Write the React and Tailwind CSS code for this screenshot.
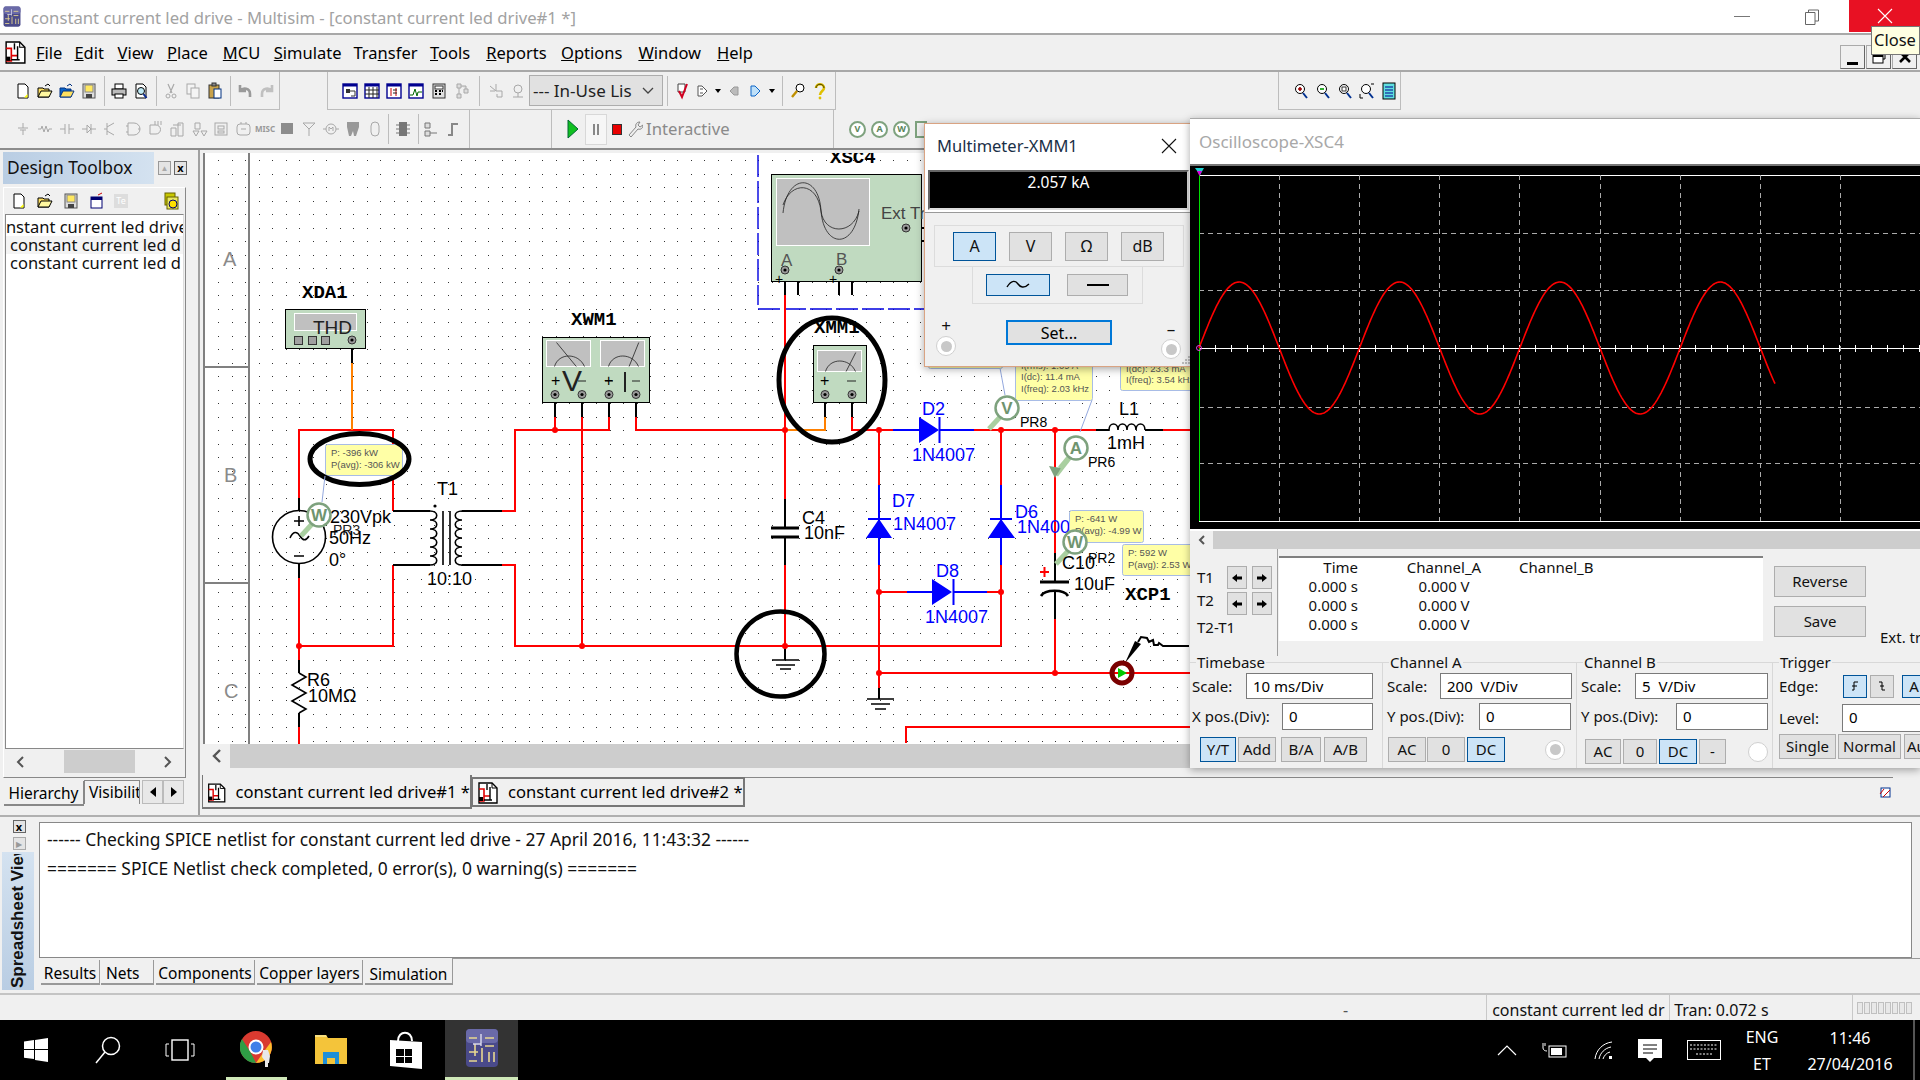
import React from "react";

const UI = "font-['Noto_Sans','Open_Sans',sans-serif]";

/* ---------- toolbar icons ---------- */
const g = "#a8a8a8";
const ICONS = {
  new: <><path d="M4 2h7l3 3v11H4z" fill="#fff" stroke="#000" /><path d="M10 15.5l3.5-3.5v3.5z" fill="#ff0" /></>,
  open: <><path d="M2 6h5l1 1h5v8H2z" fill="#ffe060" stroke="#000" /><path d="M2 15l3-6h11l-3 6z" fill="#fff8a0" stroke="#000" /><path d="M9 4l3-2 2 2" fill="none" stroke="#000" /></>,
  open2: <><path d="M2 6h5l1 1h5v8H2z" fill="#0a64c8" stroke="#003080" /><path d="M2 15l3-6h11l-3 6z" fill="#ffe060" stroke="#003080" /><path d="M9 4l3-2 2 2" fill="none" stroke="#003080" /></>,
  save: <><rect x="3" y="2" width="12" height="14" fill="#ddd" stroke="#555" /><rect x="5" y="3" width="8" height="7" fill="#ffe860" stroke="#888" /><rect x="6" y="12" width="6" height="4" fill="#444" /></>,
  print: <><rect x="5" y="2" width="8" height="5" fill="#fff" stroke="#000" /><rect x="2" y="7" width="14" height="6" fill="#bbb" stroke="#000" /><rect x="5" y="12" width="8" height="4" fill="#fff" stroke="#000" /></>,
  prev: <><path d="M4 2h7l3 3v11H4z" fill="#fff" stroke="#000" /><circle cx="9" cy="9" r="3.5" fill="#bfe9f5" stroke="#000" /><path d="M11.5 12l3 4" stroke="#0a2a90" strokeWidth="2" /></>,
  cutb: <><path d="M6 2l4 9M12 2l-4 9" stroke={g} fill="none" strokeWidth="1.2" /><circle cx="6" cy="14" r="2" fill="none" stroke={g} /><circle cx="12" cy="14" r="2" fill="none" stroke={g} /></>,
  copy: <><rect x="3" y="2" width="8" height="10" fill="#f4f4f4" stroke={g} /><rect x="7" y="6" width="8" height="10" fill="#f4f4f4" stroke={g} /></>,
  paste: <><rect x="3" y="3" width="10" height="13" fill="#c9a24a" stroke="#333" /><rect x="6" y="1" width="4" height="3" fill="#888" stroke="#333" /><rect x="8" y="7" width="7" height="9" fill="#fff" stroke="#003080" /></>,
  undo: <path d="M4 3v6h6M4 9c3-4 10-3 10 3v3" fill="none" stroke="#9a9a9a" strokeWidth="2.6" />,
  redo: <path d="M14 3v6H8M14 9c-3-4-10-3-10 3v3" fill="none" stroke="#c0c0c0" strokeWidth="2.6" />,
  s1: <><rect x="2" y="2" width="14" height="14" fill="#fff" stroke="#000090" strokeWidth="1.4" /><rect x="2" y="2" width="14" height="2.5" fill="#000090" /><rect x="5" y="7" width="4" height="4" fill="#333" /><path d="M9 9h5v5h-4" stroke="#333" fill="none" /></>,
  s2: <><rect x="2" y="2" width="14" height="14" fill="#fff" stroke="#000090" strokeWidth="1.4" /><rect x="2" y="2" width="14" height="2.5" fill="#000090" /><path d="M2 8h14M2 12h14M6 5v11M10 5v11M14 5v11" stroke="#222" /></>,
  s3: <><rect x="2" y="2" width="14" height="14" fill="#fff" stroke="#000090" strokeWidth="1.4" /><rect x="2" y="2" width="14" height="2.5" fill="#000090" /><path d="M6 6v8M11 6v8" stroke="#c00" /><path d="M8 8h4M8 11h4" stroke="#222" /></>,
  s4: <><rect x="2" y="2" width="14" height="14" fill="#fff" stroke="#000090" strokeWidth="1.4" /><rect x="2" y="2" width="14" height="2.5" fill="#000090" /><path d="M3 13h3l2-6 2 7 1-4h4" stroke="#060" fill="none" /></>,
  s5: <><rect x="3" y="2" width="12" height="14" fill="#e0e0e0" stroke="#333" /><rect x="5" y="4" width="8" height="3" fill="#fff" stroke="#333" /><path d="M5 9h2M9 9h2M13 9h-1M5 12h2M9 12h2" stroke="#000" strokeWidth="2" /></>,
  s6: <path d="M4 2h4v4H4zM11 7h4v4h-4zM4 12h4v4H4zM8 4h5v3M6 6v6" fill="#ddd" stroke={g} />,
  g1: <path d="M3 4l6 5M3 9h5M9 2v7M9 9h6v6h-5v-3" fill="none" stroke={g} />,
  g2: <><circle cx="9" cy="7" r="4" fill="none" stroke={g} /><path d="M4 15h10M9 11v4" stroke={g} /></>,
  check: <><path d="M5 2h7v8H5z" fill="#fff" stroke="#444" /><path d="M6 9l3 6 5-13" fill="none" stroke="#d00020" strokeWidth="2" /></>,
  t1: <path d="M4 4h4l5 5-5 5H4zM6 7h3M6 11h3" fill="#fff" stroke="#555" />,
  t2: <path d="M13 5H9L5 9l4 4h4z" fill="#bbb" stroke="#999" />,
  t3: <path d="M4 4h4l5 5-5 5H4z" fill="#bfe0f8" stroke="#0a64c8" />,
  find: <><circle cx="11" cy="6" r="4" fill="#fff" stroke="#000" /><path d="M8 9l-5 6" stroke="#c09000" strokeWidth="2.4" /></>,
  help: <><path d="M5 6c0-5 8-5 8 0 0 3-4 3-4 7" fill="none" stroke="#e0c000" strokeWidth="2.6" /><circle cx="9" cy="16" r="1.4" fill="#e0c000" /><path d="M5 6c0-5 8-5 8 0" fill="none" stroke="#000" strokeWidth=".7" /></>,
  zi: <><circle cx="8" cy="7" r="4.5" fill="#fff" stroke="#000" /><path d="M8 5v4M6 7h4" stroke="#900" strokeWidth="1.6" /><path d="M11 11l4 5" stroke="#003090" strokeWidth="2" /></>,
  zo: <><circle cx="8" cy="7" r="4.5" fill="#fff" stroke="#000" /><path d="M6 7h4" stroke="#090" strokeWidth="1.6" /><path d="M11 11l4 5" stroke="#003090" strokeWidth="2" /></>,
  zr: <><circle cx="8" cy="7" r="4.5" fill="#fff" stroke="#000" /><rect x="6" y="5" width="4" height="4" fill="none" stroke="#333" /><path d="M11 11l4 5" stroke="#003090" strokeWidth="2" /></>,
  zf: <><circle cx="8" cy="7" r="4.5" fill="#fff" stroke="#000" /><path d="M2 12v4h3M16 2h-3" stroke="#000" fill="none" /><path d="M11 11l4 5" stroke="#003090" strokeWidth="2" /></>,
  sheet: <><rect x="3" y="1" width="12" height="16" fill="#60e0e0" stroke="#000" /><path d="M5 5h8M5 8h8M5 11h8M5 14h8" stroke="#000090" /></>,
  tb4: <><rect x="3" y="5" width="11" height="11" fill="#fff" stroke="#000070" /><rect x="3" y="5" width="11" height="3" fill="#000070" /><path d="M10 3l4-2" stroke="#c00" /></>,
  tb6: <><rect x="3" y="1" width="10" height="12" fill="#c8c800" stroke="#666000" /><rect x="5" y="5" width="11" height="12" fill="#e8e860" stroke="#666000" /><circle cx="11" cy="12" r="4" fill="#ffe000" stroke="#000070" /></>,
  p0: <path d="M9 3v5M4 8h10M6 10h6M9 10v5" stroke={g} fill="none" />,
  p1: <path d="M2 9h3l1-3 2 6 2-6 2 6 1-3h3" stroke={g} fill="none" />,
  p2: <path d="M2 9h5M11 9h5M7 4v10M11 4v10" stroke={g} fill="none" />,
  p3: <path d="M2 9h5M11 9h5M7 5l4 4-4 4zM11 4v10" stroke={g} fill="none" />,
  p4: <path d="M5 3v12M5 7l7-4M5 11l7 4M2 9h3" stroke={g} fill="none" />,
  p5: <path d="M4 3h6a6 6 0 010 12H4zM2 6h2M2 12h2M16 9h-2" stroke={g} fill="none" />,
  p6: <><path d="M4 5h6a4 4 0 010 9H4z" stroke={g} fill="none" /><path d="M8 2h8M8 4h8" stroke={g} strokeDasharray="2 1" /></>,
  p7: <path d="M3 8h5v8H3zM10 3h5v13h-5zM5 5h8" stroke={g} fill="none" />,
  p8: <path d="M5 3h5v6H5zM3 11l3 5 3-5zM11 11l3 5 3-5z" stroke={g} fill="none" />,
  p9: <><rect x="3" y="3" width="12" height="12" fill="none" stroke={g} /><rect x="6" y="6" width="6" height="3" fill="none" stroke={g} /><rect x="6" y="11" width="6" height="2" fill="none" stroke={g} /></>,
  p10: <><rect x="3" y="4" width="13" height="11" rx="3" fill="none" stroke={g} /><path d="M7 2v2M12 2v2M7 9h5" stroke={g} /></>,
  p12: <rect x="3" y="3" width="12" height="11" fill="#8c8c8c" />,
  p13: <path d="M3 3l6 6 6-6M9 9v7M3 3h12" stroke={g} fill="none" />,
  p14: <><circle cx="9" cy="9" r="5" fill="none" stroke={g} /><path d="M1 9h3M14 9h3M7 11V7l2 2 2-2v4" stroke={g} fill="none" /></>,
  p15: <path d="M3 2h12v5l-3 9h-2l-1-5-2 5H5L3 7z" fill="#999" />,
  p16: <rect x="5" y="2" width="8" height="14" rx="4" fill="none" stroke={g} />,
  p17: <><rect x="5" y="2" width="8" height="14" fill="#777" /><path d="M2 5h14M2 9h14M2 13h14" stroke="#777" /></>,
  p18: <path d="M3 3h5v5H3zM3 11h5v5H3zM8 13h7" fill="#ddd" stroke="#777" />,
  p19: <path d="M4 15h4V4h6" fill="none" stroke="#888" strokeWidth="2" />,
  wrench: <path d="M4 15l7-8c-1-3 1-5 4-5l-2 3 2 2 3-2c0 3-2 5-5 4l-7 8z" fill="#eee" stroke="#888" />,
};

function Ic({ n, cls = "w-[22px]" }) {
  return (
    <span className={`${cls} h-[20px] flex items-center justify-center shrink-0`}>
      <svg width="18" height="18" viewBox="0 0 18 18">{ICONS[n]}</svg>
    </span>
  );
}
const Sep = ({ cls = "w-[8px]" }) => (
  <span className={`${cls} h-[30px] flex justify-center shrink-0`}><span className="w-[1px] h-full bg-[#bdbdbd]" /></span>
);
const Arrow = () => <span className="w-[10px] shrink-0 flex justify-center"><span className="border-x-[3px] border-x-transparent border-t-[4px] border-t-black" /></span>;

const DocIcon = ({ s = 24 }) => (
  <svg width={s} height={s} viewBox="0 0 24 24">
    <path d="M3 2h13l5 5v15H3z" fill="#fff" stroke="#000" strokeWidth="1.4" />
    <path d="M16 2v5h5" fill="none" stroke="#000" />
    <path d="M3 8h5v7h6M8 15v5H3" fill="none" stroke="#e00000" strokeWidth="1.6" />
    <path d="M11 3v6M14 6v13M8 19h8" fill="none" stroke="#000" strokeWidth="1.4" />
    <rect x="3" y="16" width="4" height="4" fill="#000" />
  </svg>
);

/* ---------- schematic ---------- */
function dotsPath() {
  let d = "";
  for (let i = 0; i < 74; i++) {
    const x = Math.round(218.3 + i * 13.5);
    for (let j = 0; j < 44; j++) {
      const y = Math.round(160 + j * 13.5);
      d += `M${x} ${y}h1v1h-1z`;
    }
  }
  return d;
}
const W = ({ p, c = "#ff0000", w = 2 }) => (
  <polyline points={p} fill="none" stroke={c} strokeWidth={w} shapeRendering="crispEdges" />
);
const Node = ({ x, y }) => <circle cx={x} cy={y} r="3" fill="#ff0000" />;
const T = ({ x, y, s = 18, c = "#000", f = "'Liberation Sans',sans-serif", b, children }) => (
  <text x={x} y={y} fontSize={s} fill={c} fontFamily={f} fontWeight={b ? 700 : 400}>{children}</text>
);
const MonoLabel = ({ x, y, children }) => (
  <T x={x} y={y} s={19} b f="'Liberation Mono',monospace">{children}</T>
);
const Pin = ({ x, y }) => (
  <g>
    <circle cx={x} cy={y} r="4" fill="#9a9a9a" stroke="#333" />
    <circle cx={x} cy={y} r="1.6" fill="#000" />
  </g>
);
const Meter = ({ x, y, w, h, flip }) => (
  <g>
    <rect x={x} y={y} width={w} height={h} fill="#c0c0c0" stroke="#fff" />
    <path d={`M${x + 8} ${y + h}c4-14 ${w - 20}-14 ${w - 14} 0`} fill="none" stroke="#222" strokeWidth=".8" />
    <path d={flip ? `M${x + w * 0.65} ${y + h}l${w * 0.22} ${-h + 2}` : `M${x + 10} ${y + 2}l${w * 0.45} ${h - 2}`} stroke="#222" strokeWidth=".8" />
  </g>
);
const Probe = ({ cx, cy, l, tx, ty }) => (
  <g>
    <path d={`M${cx - 6} ${cy + 8}L${tx} ${ty}`} stroke="#a9cfa0" strokeWidth="5" />
    <circle cx={cx} cy={cy} r="11.5" fill="#fff" stroke="#7ea27e" strokeWidth="2.5" />
    <text x={cx} y={cy + 6} textAnchor="middle" fontSize="17" fontWeight="700" fill="#6f946f" fontFamily="'Liberation Sans',sans-serif">{l}</text>
  </g>
);
const TS = 9.5;
const Tip = ({ x, y, w, h, a, b }) => (
  <g>
    <rect x={x + 0.5} y={y + 0.5} width={w} height={h} rx="2" fill="#ffffa6" stroke="#a8bce6" />
    {a && <T x={x + 6} y={y + 12} s={TS} c="#555">{a}</T>}
    {b && <T x={x + 6} y={y + 24} s={TS} c="#555">{b}</T>}
  </g>
);

function Schematic() {
  return (
    <svg className="block w-[987px] h-[591px]" viewBox="203 153 987 591">
      <rect x="203" y="153" width="987" height="591" fill="#fff" />
      <path d={dotsPath()} fill="#333" />
      <path d="M204 153v591M249 153v591M204 367h45M204 583h45" stroke="#808080" strokeWidth="2" fill="none" />
      <T x={223} y={266} s={20} c="#8a8a8a">A</T>
      <T x={224} y={482} s={20} c="#8a8a8a">B</T>
      <T x={224} y={698} s={20} c="#8a8a8a">C</T>

      <path d="M758 155v150M758 309h166" stroke="#0000e0" strokeWidth="1.4" strokeDasharray="22 4" fill="none" />

      <W p="299,498 299,430 393,430 393,511" />
      <W p="299,578 299,660" />
      <W p="299,727 299,744" />
      <W p="299,646 393,646 393,565" />
      <W p="502,511 515,511 515,430 609,430 609,417" />
      <W p="555,430 555,417" />
      <W p="582,417 582,646" />
      <W p="502,565 515,565 515,646 1001,646" />
      <W p="636,417 636,430 825,430" />
      <W p="785,295 785,499" />
      <W p="785,565 785,646" />
      <W p="852,417 852,430 893,430" />
      <W p="974,430 1096,430" />
      <W p="1163,430 1190,430" />
      <W p="879,430 879,485" />
      <W p="879,565 879,688" />
      <W p="1001,430 1001,485" />
      <W p="1001,565 1001,646" />
      <W p="879,592 907,592" />
      <W p="987,592 1001,592" />
      <W p="1055,430 1055,553" />
      <W p="1055,619 1055,673" />
      <W p="879,673 1190,673" />
      <W p="906,743 906,727 1190,727" />
      <W p="352,363 352,430" c="#ff8000" />
      <W p="825,417 825,430 785,430" c="#ff8000" />
      <W p="352,340 352,363" c="#000" />
      <W p="299,498 299,511" c="#000" />
      <W p="299,564 299,578" c="#000" />
      <W p="299,660 299,673" c="#000" />
      <W p="299,713 299,727" c="#000" />
      <W p="393,511 430,511" c="#000" />
      <W p="393,565 430,565" c="#000" />
      <W p="462,511 502,511" c="#000" />
      <W p="462,565 502,565" c="#000" />
      <W p="555,395 555,417" c="#000" />
      <W p="582,395 582,417" c="#000" />
      <W p="609,395 609,417" c="#000" />
      <W p="636,395 636,417" c="#000" />
      <W p="825,395 825,417" c="#000" />
      <W p="852,395 852,417" c="#000" />
      <W p="785,499 785,528" c="#000" />
      <W p="785,537 785,565" c="#000" />
      <W p="785,646 785,660" c="#000" />
      <W p="879,688 879,699" c="#000" />
      <W p="1055,553 1055,582" c="#000" />
      <W p="1055,592 1055,619" c="#000" />
      <W p="1096,430 1109,430" c="#000" />
      <W p="1145,430 1163,430" c="#000" />
      <W p="785,270 785,295" c="#000" />
      <W p="785,270 798,270 798,295" c="#000" />
      <W p="839,270 839,295" c="#000" />
      <W p="839,270 852,270 852,295" c="#000" />
      <W p="906,228 924,228" c="#000" />
      <W p="906,228 906,241 924,241" c="#000" />

      <W p="893,430 919,430" c="#0000ff" />
      <W p="939,430 974,430" c="#0000ff" />
      <W p="879,485 879,565" c="#0000ff" />
      <W p="1001,485 1001,565" c="#0000ff" />
      <W p="907,592 932,592" c="#0000ff" />
      <W p="953,592 987,592" c="#0000ff" />
      <path d="M919 417l20 13-20 13zM932 579l20 13-20 13zM866 538l13-19 13 19zM988 538l13-19 14 19z" fill="#0000ff" />
      <path d="M939.5 417v26M953.5 579v26M868 519h23M990 519h22" stroke="#0000ff" strokeWidth="2" fill="none" />

      {[[299, 646], [555, 430], [582, 646], [785, 430], [785, 646], [879, 430], [1001, 430], [1055, 430], [879, 592], [1001, 592], [879, 673], [1055, 673]].map(([x, y]) => (
        <Node key={x + "-" + y} x={x} y={y} />
      ))}

      {/* XDA1 */}
      <MonoLabel x={302} y={298}>XDA1</MonoLabel>
      <rect x="285.5" y="309.5" width="80" height="39" fill="#c0dac0" stroke="#000" />
      <rect x="294.5" y="313.5" width="62" height="17" fill="#c0c0c0" stroke="#fff" />
      <T x={313} y={334} s={19} c="#222">THD</T>
      {[294, 308, 321].map((x) => <rect key={x} x={x + 0.5} y="336.5" width="8" height="8" fill="#a0a0a0" stroke="#333" />)}
      <Pin x={352} y={340} />

      {/* XWM1 */}
      <MonoLabel x={571} y={325}>XWM1</MonoLabel>
      <rect x="542.5" y="337.5" width="107" height="65" fill="#c0dac0" stroke="#000" />
      <Meter x={546.5} y={340.5} w={44} h={26} />
      <Meter x={600.5} y={340.5} w={44} h={26} flip />
      <T x={551} y={386} s={16}>+</T>
      <T x={562} y={391} s={30} c="#222">V</T>
      <path d="M578 381h8M605 381h8M632 381h8" stroke="#222" />
      <T x={604} y={386} s={16}>+</T>
      <path d="M625 372v20" stroke="#222" strokeWidth="2" />
      {[555, 582, 609, 636].map((x) => <Pin key={x} x={x} y={394.5} />)}

      {/* XMM1 */}
      <MonoLabel x={814} y={333}>XMM1</MonoLabel>
      <rect x="813.5" y="345.5" width="53" height="57" fill="#c0dac0" stroke="#000" />
      <Meter x={817.5} y={350.5} w={44} h={21} flip />
      <T x={820} y={386} s={16}>+</T>
      <path d="M847 381h9" stroke="#222" />
      <Pin x={825} y={394.5} /><Pin x={852} y={394.5} />
      <ellipse cx="832" cy="380" rx="53" ry="62" fill="none" stroke="#000" strokeWidth="5" />

      {/* XSC4 */}
      <MonoLabel x={830} y={163}>XSC4</MonoLabel>
      <rect x="771.5" y="174.5" width="150" height="107" fill="#c0dac0" stroke="#000" />
      <rect x="776.5" y="178.5" width="93" height="67" fill="#c0c0c0" stroke="#fff" />
      <path d="M783 213c4-40 36-40 38-2 3 38 34 38 38-2M783 205c8-24 34-24 38 6 3 24 32 24 38 0" fill="none" stroke="#222" strokeWidth=".8" />
      <T x={781} y={266} s={17} c="#555">A</T>
      <T x={836} y={265} s={17} c="#555">B</T>
      <T x={775} y={284} s={14}>+</T>
      <T x={829} y={284} s={14}>+</T>
      <T x={881} y={219} s={17} c="#444">Ext Tri</T>
      <Pin x={785} y={270} /><Pin x={839} y={270} /><Pin x={906} y={228} />

      {/* AC source */}
      <circle cx="299" cy="537" r="26.5" fill="none" stroke="#000" strokeWidth="1.6" />
      <path d="M294 521h10M299 516v10M294 556h10" stroke="#000" strokeWidth="1.6" />
      <path d="M290 538c3-7 7-7 10-2s6 5 9 0" fill="none" stroke="#000" strokeWidth="1.6" />
      <T x={330} y={523}>230Vpk</T>
      <T x={333} y={535} s={14} c="#222">PR3</T>
      <T x={329} y={544}>50Hz</T>
      <T x={329} y={566}>0°</T>

      <Tip x={325} y={444} w={77} h={31} a="P: -396 kW" b="P(avg): -306 kW" />
      <ellipse cx="359.5" cy="459" rx="49.5" ry="25.5" fill="none" stroke="#000" strokeWidth="5" />
      <path d="M325 476l-3 26" stroke="#93a8de" fill="none" />
      <Probe cx={319} cy={515} l="W" tx={301} ty={536} />

      {/* T1 */}
      <path d="M462 511c-9 0-9 9 0 9c-9 0-9 9 0 9c-9 0-9 9 0 9c-9 0-9 9 0 9c-9 0-9 9 0 9c-9 0-9 9 0 9" fill="none" stroke="#000" strokeWidth="1.6" />
      <path d="M430 511c9 0 9 9 0 9c9 0 9 9 0 9c9 0 9 9 0 9c9 0 9 9 0 9c9 0 9 9 0 9c9 0 9 9 0 9" fill="none" stroke="#000" strokeWidth="1.6" />
      <path d="M443 511v54M450 511v54" stroke="#000" strokeWidth="1.6" />
      <circle cx="435" cy="506" r="1.6" fill="#000" />
      <T x={437} y={495}>T1</T>
      <T x={427} y={585}>10:10</T>

      {/* R6 */}
      <path d="M299 673l7 4-14 8 14 8-14 8 14 8-7 4" fill="none" stroke="#000" strokeWidth="1.6" />
      <T x={307} y={686}>R6</T>
      <T x={308} y={702}>10MΩ</T>

      {/* C4 */}
      <path d="M771 528h28M771 537h28" stroke="#000" strokeWidth="3" />
      <T x={802} y={524}>C4</T>
      <T x={804} y={539}>10nF</T>

      {/* grounds */}
      <path d="M772 660h27M776 665h19M780 669h11M867 699h27M871 704h19M875 709h11" stroke="#000" strokeWidth="1.6" />
      <ellipse cx="780.5" cy="654" rx="44" ry="42.5" fill="none" stroke="#000" strokeWidth="4.5" />

      {/* diode labels */}
      <T x={922} y={415} c="#0000ff">D2</T>
      <T x={912} y={461} c="#0000ff">1N4007</T>
      <T x={892} y={507} c="#0000ff">D7</T>
      <T x={893} y={530} c="#0000ff">1N4007</T>
      <T x={1015} y={518} c="#0000ff">D6</T>
      <T x={1017} y={533} c="#0000ff">1N400</T>
      <T x={936} y={577} c="#0000ff">D8</T>
      <T x={925} y={623} c="#0000ff">1N4007</T>

      {/* L1 */}
      <path d="M1109 430c0-8 9-8 9 0c0-8 9-8 9 0c0-8 9-8 9 0c0-8 9-8 9 0" fill="none" stroke="#000" strokeWidth="1.6" />
      <T x={1119} y={415}>L1</T>
      <T x={1107} y={449}>1mH</T>

      {/* tips & probes */}
      <path d="M1000 368l5 27M1092 400l-12 32" stroke="#93a8de" fill="none" />
      <rect x="928.5" y="345.5" width="74" height="23" rx="2" fill="#ffffa6" stroke="#a8bce6" />
      <Tip x={1015} y={355} w={77} h={45} />
      <T x={1021} y={369} s={TS} c="#555">I(rms): 1.09 A</T>
      <T x={1021} y={380} s={TS} c="#555">I(dc): 11.4 mA</T>
      <T x={1021} y={392} s={TS} c="#555">I(freq): 2.03 kHz</T>
      <Tip x={1120} y={355} w={74} h={35} />
      <T x={1126} y={372} s={TS} c="#555">I(dc): 23.3 mA</T>
      <T x={1126} y={383} s={TS} c="#555">I(freq): 3.54 kHz</T>
      <Probe cx={1007} cy={408} l="V" tx={989} ty={429} />
      <T x={1020} y={427} s={14}>PR8</T>
      <path d="M1070 457L1056 475" stroke="#a9cfa0" strokeWidth="5" />
      <path d="M1049 466l6 12 6-10z" fill="#7ea27e" />
      <Probe cx={1076} cy={448} l="A" tx={1060} ty={468} />
      <T x={1088} y={467} s={14}>PR6</T>

      <Tip x={1069} y={510} w={74} h={32} a="P: -641 W" b="P(avg): -4.99 W" />
      <Tip x={1122} y={544} w={72} h={31} a="P: 592 W" b="P(avg): 2.53 W" />
      <Probe cx={1075} cy={542} l="W" tx={1056} ty={564} />
      <T x={1088} y={563} s={14}>PR2</T>
      <T x={1062} y={569}>C10</T>
      <T x={1074} y={590}>10uF</T>
      <path d="M1040 572h9M1044.5 567v10" stroke="#ff0000" strokeWidth="2" />
      <path d="M1040 582h29" stroke="#000" strokeWidth="3" />
      <path d="M1041 596c4-7 23-7 27 0" fill="none" stroke="#000" strokeWidth="2.6" />
      <MonoLabel x={1125} y={600}>XCP1</MonoLabel>

      {/* current clamp */}
      <path d="M1125 663l10-22 6 3z" fill="#000" />
      <path d="M1138 642l3-5 6 1 2 4 4-2 1 5 4 0 1-2 4 3h26" fill="none" stroke="#000" strokeWidth="2" />
      <circle cx="1122" cy="673" r="10" fill="none" stroke="#7a0000" strokeWidth="5" />
      <path d="M1118 668l9 5-9 5z" fill="#00c800" />
    </svg>
  );
}

/* ---------- small controls ---------- */
const BTN = "flex items-center justify-center border text-[15px] leading-none shrink-0";
const OFF = "bg-[#e1e1e1] border-[#adadad] text-[#111]";
const ON = "bg-[#cce4f7] border-[#005499] text-[#111]";
const Input = ({ cls, children }) => (
  <div className={`${cls} bg-white border border-[#7a7a7a] pl-[6px] text-[15px] leading-[24px] text-black shrink-0 whitespace-pre`}>{children}</div>
);
const Radio = ({ dot }) => (
  <span className="w-[20px] h-[20px] rounded-full bg-white border border-[#d0d0d0] flex items-center justify-center shrink-0">
    {dot && <span className="w-[11px] h-[11px] rounded-full bg-[#c8c8c8]" />}
  </span>
);
const ArrowBtn = ({ d }) => (
  <span className="w-[20px] h-[23px] bg-[#e1e1e1] border border-[#adadad] flex items-center justify-center">
    <svg width="10" height="10" viewBox="0 0 10 10"><path d={d === "l" ? "M0 5l5-4v2.5h5v3H5V9z" : "M10 5L5 1v2.5H0v3h5V9z"} fill="#000" /></svg>
  </span>
);
const GroupTitle = ({ children }) => (
  <span className="absolute top-[-11px] left-[6px] px-[1px] bg-[#f0f0f0] text-[15px] leading-[20px] text-[#111]">{children}</span>
);

/* ---------- windows ---------- */
function Multimeter() {
  return (
    <div className={`${UI} absolute left-[924px] top-[123px] w-[269px] h-[244px] border border-[#d9a382] bg-[#f0f0f0] shadow-[0_2px_8px_rgba(0,0,0,0.35)] flex flex-col`}>
      <div className="h-[44px] bg-white flex items-center justify-between pl-[12px] pr-[15px] shrink-0">
        <span className="text-[16.5px] text-[#1a2f47]">Multimeter-XMM1</span>
        <svg width="16" height="16" viewBox="0 0 16 16"><path d="M1 1l14 14M15 1L1 15" stroke="#111" strokeWidth="1.1" /></svg>
      </div>
      <div className="h-[44px] bg-[#fff] px-[3px] py-[2px] shrink-0">
        <div className="h-[40px] bg-black border-2 border-t-[#666] border-l-[#666] border-r-[#ddd] border-b-[#ddd] text-center text-white text-[15.5px] leading-[20px]">2.057 kA</div>
      </div>
      <div className="h-[1px] bg-[#999] shrink-0" />
      <div className="mx-[9px] mt-[12px] h-[42px] w-[250px] border border-[#dcdcdc] flex items-center gap-[13px] pl-[18px] shrink-0">
        <span className={`${BTN} ${ON} w-[43px] h-[29px] text-[16px]`}>A</span>
        <span className={`${BTN} ${OFF} w-[43px] h-[29px] text-[16px]`}>V</span>
        <span className={`${BTN} ${OFF} w-[43px] h-[29px] text-[16px]`}>Ω</span>
        <span className={`${BTN} ${OFF} w-[43px] h-[29px] text-[16px]`}>dB</span>
      </div>
      <div className="ml-[47px] h-[37px] w-[171px] border border-[#dcdcdc] border-t-0 flex items-center gap-[17px] pl-[13px] shrink-0">
        <span className={`${BTN} ${ON} w-[64px] h-[22px]`}>
          <svg width="24" height="10" viewBox="0 0 24 10"><path d="M1 7c5-8 9-6 11-3s6 5 11 0" fill="none" stroke="#000" strokeWidth="1.4" /></svg>
        </span>
        <span className={`${BTN} ${OFF} w-[61px] h-[22px]`}><span className="w-[22px] h-[2px] bg-black" /></span>
      </div>
      <div className="flex px-[11px] mt-[15px] justify-between">
        <div className="flex flex-col items-center w-[20px] -mt-[3px]">
          <span className="text-[17px] leading-[20px] text-[#111]">+</span>
          <Radio dot />
        </div>
        <span className={`${BTN} w-[106px] h-[25px] mt-[1px] ml-[9px] bg-[#e1e1e1] border-2 border-[#0078d7] text-[16px]`}>Set...</span>
        <div className="flex flex-col items-center w-[20px] ml-[8px]">
          <span className="text-[17px] leading-[20px] text-[#111]">–</span>
          <Radio dot />
        </div>
      </div>
      <svg width="10" height="10" viewBox="0 0 10 10" className="absolute right-[1px] bottom-[1px]"><path d="M7 1h2v2H7zM4 4h2v2H4zM7 4h2v2H7zM1 7h2v2H1zM4 7h2v2H4zM7 7h2v2H7z" fill="#bbb" /></svg>
    </div>
  );
}

function Screen() {
  const v = [1279, 1359, 1439, 1519, 1600, 1680, 1760, 1840];
  const h = [232, 289, 406, 462];
  let d = "";
  for (let x = 1199; x <= 1775; x += 1) {
    const y = 347 - 66 * Math.sin(((x - 1199) / 160.4) * 2 * Math.PI);
    d += `${x},${y.toFixed(1)} `;
  }
  const ticks = [];
  for (let x = 1199; x < 1920; x += 16) ticks.push(x);
  return (
    <svg className="block w-[730px] h-[363px] shrink-0" viewBox="1190 165 730 363">
      <rect x="1190" y="165" width="730" height="363" fill="#000" />
      <path d="M1199 174.5h721M1199 347.5h721M1199 520.5h721" stroke="#fff" strokeWidth="1.2" />
      {h.map((y) => <path key={y} d={`M1199 ${y}.5h721`} stroke="#aaa" strokeDasharray="5 4" />)}
      {v.map((x) => <path key={x} d={`M${x}.5 174v346`} stroke="#aaa" strokeDasharray="5 4" />)}
      {ticks.map((x) => <path key={x} d={`M${x}.5 344v7`} stroke="#fff" />)}
      <path d="M1199.5 174v346" stroke="#00e000" />
      <polyline points={d} fill="none" stroke="#ff0000" strokeWidth="1.6" />
      <circle cx="1199" cy="347" r="2.5" fill="none" stroke="#e040e0" />
      <path d="M1195 167h9l-4 7z" fill="#20d0d0" />
      <path d="M1197 170h5l-2.500 5z" fill="#e000e0" />
    </svg>
  );
}

function Scope() {
  const rows = [
    ["Time", "Channel_A", "Channel_B"],
    ["0.000 s", "0.000 V", ""],
    ["0.000 s", "0.000 V", ""],
    ["0.000 s", "0.000 V", ""],
  ];
  return (
    <div className={`${UI} absolute left-[1190px] top-[118px] w-[730px] h-[650px] bg-[#f0f0f0] border-t border-[#aaa] shadow-[0_2px_8px_rgba(0,0,0,0.35)] flex flex-col overflow-hidden text-[#111]`}>
      <div className="h-[45px] shrink-0 bg-white flex items-center pl-[9px] text-[17px] text-[#a8a8a8]">Oscilloscope-XSC4</div>
      <div className="h-[2px] shrink-0 bg-[#777]" />
      <Screen />
      <div className="h-[2px] shrink-0 bg-white" />
      <div className="h-[18px] shrink-0 flex bg-[#f0f0f0]">
        <span className="w-[23px] flex items-center justify-center text-[#555]">
          <svg width="8" height="10" viewBox="0 0 8 10"><path d="M6 1L2 5l4 4" fill="none" stroke="#555" strokeWidth="2" /></svg>
        </span>
        <span className="flex-1 bg-[#cdcdcd]" />
      </div>

      <div className="h-[107px] flex shrink-0">
        <div className="w-[88px] shrink-0 border-r border-[#a0a0a0] pl-[7px] pt-[17px] text-[15px]">
          <div className="flex h-[23px] items-center"><span className="w-[30px]">T1</span><span className="flex gap-[5px]"><ArrowBtn d="l" /><ArrowBtn d="r" /></span></div>
          <div className="flex h-[23px] mt-[3px] items-center"><span className="w-[30px] -mt-[6px]">T2</span><span className="flex gap-[5px]"><ArrowBtn d="l" /><ArrowBtn d="r" /></span></div>
          <div className="mt-[2px] leading-[20px]">T2-T1</div>
        </div>
        <div className="ml-[1px] mt-[7px] w-[484px] h-[85px] shrink-0 bg-white border-t-2 border-[#808080] text-[15px] leading-[19px]">
          {rows.map((r, i) => (
            <div key={i} className="flex">
              <span className="w-[79px] text-right">{r[0]}</span>
              <span className="ml-[30px] w-[112px] text-center">{r[1]}</span>
              <span className="ml-[19px]">{r[2]}</span>
            </div>
          ))}
        </div>
        <div className="ml-[11px] mt-[17px] flex flex-col gap-[9px] w-[92px] shrink-0">
          <span className={`${BTN} ${OFF} h-[31px]`}>Reverse</span>
          <span className={`${BTN} ${OFF} h-[31px]`}>Save</span>
        </div>
        <span className="ml-[14px] mt-[78px] text-[15px] leading-[20px] whitespace-nowrap">Ext. trigger</span>
      </div>

      <div className="flex mt-[6px] h-[106px] shrink-0 text-[15px]">
        <div className="relative w-[193px] shrink-0 border-t border-r border-[#d8d8d8] pl-[2px] pt-[10px]">
          <GroupTitle>Timebase</GroupTitle>
          <div className="flex items-center h-[26px]"><span className="w-[54px] shrink-0">Scale:</span><Input cls="w-[127px] h-[26px]">10 ms/Div</Input></div>
          <div className="flex items-center h-[27px] mt-[4px]"><span className="w-[90px] shrink-0">X pos.(Div):</span><Input cls="w-[91px] h-[27px]">0</Input></div>
          <div className="flex mt-[7px] pl-[8px]">
            <span className={`${BTN} ${ON} w-[36px] h-[25px]`}>Y/T</span>
            <span className={`${BTN} ${OFF} w-[38px] h-[25px] ml-[2px]`}>Add</span>
            <span className={`${BTN} ${OFF} w-[40px] h-[25px] ml-[5px]`}>B/A</span>
            <span className={`${BTN} ${OFF} w-[43px] h-[25px] ml-[3px]`}>A/B</span>
          </div>
        </div>
        <div className="relative w-[194px] shrink-0 border-t border-r border-[#d8d8d8] pl-[4px] pt-[10px]">
          <GroupTitle>Channel A</GroupTitle>
          <div className="flex items-center h-[26px]"><span className="w-[53px] shrink-0">Scale:</span><Input cls="w-[132px] h-[26px]">200  V/Div</Input></div>
          <div className="flex items-center h-[27px] mt-[4px]"><span className="w-[92px] shrink-0">Y pos.(Div):</span><Input cls="w-[92px] h-[27px]">0</Input></div>
          <div className="flex items-center mt-[7px] pl-[1px]">
            <span className={`${BTN} ${OFF} w-[38px] h-[25px]`}>AC</span>
            <span className={`${BTN} ${OFF} w-[38px] h-[25px] ml-[1px]`}>0</span>
            <span className={`${BTN} ${ON} w-[38px] h-[25px] ml-[2px]`}>DC</span>
            <span className="ml-[40px]"><Radio dot /></span>
          </div>
        </div>
        <div className="relative w-[196px] shrink-0 border-t border-r border-[#d8d8d8] pl-[4px] pt-[10px]">
          <GroupTitle>Channel B</GroupTitle>
          <div className="flex items-center h-[26px]"><span className="w-[54px] shrink-0">Scale:</span><Input cls="w-[133px] h-[26px]">5  V/Div</Input></div>
          <div className="flex items-center h-[27px] mt-[4px]"><span className="w-[95px] shrink-0">Y pos.(Div):</span><Input cls="w-[92px] h-[27px]">0</Input></div>
          <div className="flex items-center mt-[9px] pl-[4px]">
            <span className={`${BTN} ${OFF} w-[36px] h-[25px]`}>AC</span>
            <span className={`${BTN} ${OFF} w-[34px] h-[25px] ml-[2px]`}>0</span>
            <span className={`${BTN} ${ON} w-[38px] h-[25px] ml-[2px]`}>DC</span>
            <span className={`${BTN} ${OFF} w-[27px] h-[25px] ml-[2px]`}>-</span>
            <span className="ml-[22px]"><Radio /></span>
          </div>
        </div>
        <div className="relative w-[147px] shrink-0 border-t border-[#d8d8d8] pl-[6px] pt-[10px]">
          <GroupTitle>Trigger</GroupTitle>
          <div className="flex items-center h-[26px]">
            <span className="w-[64px] shrink-0">Edge:</span>
            <span className={`${BTN} ${ON} w-[24px] h-[23px] text-[11px]`}>
              <svg width="10" height="10" viewBox="0 0 10 10"><path d="M2 9h2V1h4M2 5h5" fill="none" stroke="#000" /></svg>
            </span>
            <span className={`${BTN} ${OFF} w-[24px] h-[23px] ml-[3px]`}>
              <svg width="10" height="10" viewBox="0 0 10 10"><path d="M2 1h3v8h3M3 5h4" fill="none" stroke="#000" /></svg>
            </span>
            <span className={`${BTN} ${ON} w-[24px] h-[23px] ml-[8px]`}>A</span>
          </div>
          <div className="flex items-center h-[28px] mt-[5px]"><span className="w-[63px] shrink-0">Level:</span><Input cls="w-[90px] h-[28px]">0</Input></div>
          <div className="flex mt-[2px]">
            <span className={`${BTN} ${OFF} w-[57px] h-[25px]`}>Single</span>
            <span className={`${BTN} ${OFF} w-[63px] h-[25px] ml-[2px]`}>Normal</span>
            <span className={`${BTN} ${OFF} w-[30px] h-[25px] ml-[3px] justify-start pl-[2px]`}>Auto</span>
          </div>
        </div>
      </div>
    </div>
  );
}

/* ---------- taskbar ---------- */
const WinLogo = () => (
  <svg width="24" height="24" viewBox="0 0 24 24"><path d="M0 3.500l10-1.400V11H0zM11 2l13-2v11H11zM0 12h10v9L0 19.700zM11 12h13v12l-13-2z" fill="#fff" /></svg>
);
const Chrome = () => (
  <svg width="34" height="38" viewBox="0 0 34 38">
    <circle cx="16" cy="17" r="16" fill="#d93a30" />
    <path d="M16 33A16 16 0 012 9l9 14z" fill="#2f9e45" />
    <path d="M31 12a16 16 0 01-15 21l9-13z" fill="#fbc02d" />
    <circle cx="16" cy="17" r="7.500" fill="#fff" />
    <circle cx="16" cy="17" r="5.500" fill="#3f7fe8" />
    <path d="M23 20h5l2 6-1 7h-1v4h-3v-6l-3-4z" fill="#e8e8e8" />
  </svg>
);
const Folder = () => (
  <svg width="32" height="36" viewBox="0 0 32 36">
    <path d="M0 3h11l2 3h19v26H0z" fill="#f4c43a" />
    <path d="M0 3h11l1 2H0z" fill="#f9e080" />
    <path d="M8 20h16v12h-4v-6h-8v6H8z" fill="#1e8fd8" />
  </svg>
);
const Store = () => (
  <svg width="32" height="38" viewBox="0 0 32 38">
    <path d="M8 10c0-11 14-11 14 0" fill="none" stroke="#fff" strokeWidth="2" />
    <path d="M0 9l32 2v27L0 35z" fill="#fff" />
    <path d="M6 18h8v7H6zM15 18h7v7h-7zM6 26h8v6H6zM15 26h7v6h-7z" fill="#000" />
  </svg>
);
const MsIcon = ({ s = 34 }) => (
  <svg width={s} height={s * 1.18} viewBox="0 0 34 40">
    <rect x="1" y="1" width="32" height="38" rx="4" fill="#4a4a8a" />
    <rect x="1" y="1" width="32" height="14" rx="4" fill="#6a6aa8" />
    <path d="M4 10h8M4 24h9M4 33h8M20 10h9M20 18h9M10 16v12M17 20v14M24 24v10M29 24v10" stroke="#e8d890" strokeWidth="1.6" fill="none" />
    <path d="M16 6v12M8 16h8" stroke="#dde" strokeWidth="1.4" />
  </svg>
);

export default function App() {
  const menu = [
    ["F", "ile", "ml-[-1px]"], ["E", "dit", "ml-[-1.5px]"], ["V", "iew", ""], ["P", "lace", ""],
    ["M", "CU", "ml-[1.5px]"], ["S", "imulate", ""], ["Tra", "nsfer", "ml-[-1.5px]", 1], ["T", "ools", "ml-[-1px]"],
    ["R", "eports", "ml-[2.5px]"], ["O", "ptions", "ml-[1px]"], ["W", "indow", "ml-[2.5px]"], ["H", "elp", "ml-[2.5px]"],
  ];
  const row2 = ["p0", "p1", "p2", "p3", "p4", "p5", "p6", "p7", "p8", "p9", "p10"];
  const row2b = ["p12", "p13", "p14", "p15", "p16"];

  return (
    <div className={`${UI} relative w-[1920px] h-[1080px] overflow-hidden bg-[#f0f0f0] flex flex-col text-black`}>
      {/* title bar */}
      <div className="h-[35px] shrink-0 bg-white border-b-2 border-[#a8a8a8] flex items-start">
        <span className="ml-[3px] mt-[6px]"><MsIcon s={18} /></span>
        <span className="ml-[10px] mt-[5px] text-[16.700px] leading-[26px] text-[#a2a2a2] whitespace-nowrap">constant current led drive - Multisim - [constant current led drive#1 *]</span>
        <div className="ml-auto flex h-[32px]">
          <span className="w-[16px] h-[1px] bg-[#777] mt-[16px] mr-[54px]" />
          <span className="w-[16px] h-[16px] mt-[9px] mr-[29px]">
            <svg width="16" height="16" viewBox="0 0 16 16"><path d="M4.500 3.500V1h10v11H11M1.500 3.500h9.500v12h-9.500z" fill="none" stroke="#666" /></svg>
          </span>
          <span className="w-[71px] h-[32px] bg-[#e81123] flex items-center justify-center">
            <svg width="16" height="16" viewBox="0 0 16 16"><path d="M1 1l14 14M15 1L1 15" stroke="#fff" strokeWidth="1.1" /></svg>
          </span>
        </div>
      </div>

      {/* menu bar */}
      <div className="h-[37px] shrink-0 border-b-2 border-[#a8a8a8] flex items-center">
        <span className="ml-[3px] mr-[9px]"><DocIcon s={25} /></span>
        <div className="flex gap-[13.500px] text-[16.500px] leading-[24px]">
          {menu.map(([a, b, m, alt]) => (
            <span key={b} className={`whitespace-nowrap ${m}`}>
              {alt ? <>{a}<u>n</u>sfer</> : <><u>{a}</u>{b}</>}
            </span>
          ))}
        </div>
        <div className="ml-auto mr-[3px] flex gap-[1px] mt-[8px]">
          <span className="w-[25px] h-[24px] bg-[#f0f0f0] border border-[#aaa] border-b-[#666] border-r-[#666] flex items-end justify-center pb-[3px]"><span className="w-[11px] h-[3px] bg-black" /></span>
          <span className="w-[25px] h-[24px] bg-[#f0f0f0] border border-[#aaa] border-b-[#666] border-r-[#666] flex items-center justify-center"><svg width="16" height="16" viewBox="0 0 16 16"><rect x="2" y="5" width="10" height="9" fill="#fff" stroke="#000" /><rect x="2" y="5" width="10" height="3" fill="#000" /><path d="M6 5V2h8v8h-2" fill="none" stroke="#000" /></svg></span>
          <span className="w-[25px] h-[24px] bg-[#f0f0f0] border border-[#aaa] border-b-[#666] border-r-[#666] flex items-center justify-center"><svg width="14" height="14" viewBox="0 0 14 14"><path d="M2 2l10 10M12 2L2 12" stroke="#000" strokeWidth="2.6" /></svg></span>
        </div>
      </div>

      {/* toolbar 1 */}
      <div className="h-[38px] shrink-0 flex relative">
        <div className="w-[280px] shrink-0 border-r border-b border-[#bdbdbd] flex items-center pl-[12px]">
          <Ic n="new" /><Ic n="open" /><Ic n="open2" /><Ic n="save" /><Sep />
          <Ic n="print" /><Ic n="prev" /><Sep />
          <Ic n="cutb" /><Ic n="copy" /><Ic n="paste" /><Sep />
          <Ic n="undo" /><Ic n="redo" />
        </div>
        <div className="ml-[47px] w-[509px] shrink-0 border-x border-b border-[#bdbdbd] flex items-center pl-[11px]">
          <Ic n="s1" /><Ic n="s2" /><Ic n="s3" /><Ic n="s4" /><Ic n="s5" cls="w-[24px]" /><Ic n="s6" />
          <Sep cls="w-[12px]" />
          <Ic n="g1" /><Ic n="g2" />
          <div className="w-[134px] h-[31px] bg-[#e1e1e1] border border-[#adadad] flex items-center justify-between pl-[3px] pr-[8px] text-[17px] text-[#222] whitespace-nowrap overflow-hidden">
            <span>--- In-Use Lis</span>
            <svg width="12" height="8" viewBox="0 0 12 8" className="shrink-0"><path d="M1 1l5 5 5-5" fill="none" stroke="#444" strokeWidth="1.300" /></svg>
          </div>
          <Sep />
          <Ic n="check" /><Ic n="t1" cls="w-[20px]" /><Arrow /><Ic n="t2" /><Ic n="t3" /><Arrow />
          <Sep cls="w-[10px]" />
          <Ic n="find" /><Ic n="help" />
        </div>
        <div className="ml-[442px] w-[123px] shrink-0 border-x border-b border-[#bdbdbd] flex items-center pl-[11px]">
          <Ic n="zi" /><Ic n="zo" /><Ic n="zr" /><Ic n="zf" /><Ic n="sheet" />
        </div>
      </div>

      {/* toolbar 2 */}
      <div className="h-[40px] shrink-0 border-b-2 border-[#8c8c8c] flex">
        <div className="w-[470px] shrink-0 border-r border-[#bdbdbd] flex items-center pl-[12px]">
          {row2.map((n) => <Ic key={n} n={n} />)}
          <span className="w-[22px] text-center text-[8px] font-bold text-[#999] shrink-0">MISC</span>
          {row2b.map((n) => <Ic key={n} n={n} />)}
          <Sep cls="w-[4px]" /><Ic n="p17" cls="w-[26px]" /><Sep cls="w-[4px]" /><Ic n="p18" /><Ic n="p19" />
        </div>
        <div className="ml-[81px] w-[283px] shrink-0 border-x border-[#bdbdbd] flex items-center pl-[15px]">
          <svg width="12" height="20" viewBox="0 0 12 20" className="shrink-0"><path d="M1 1l10 9-10 9z" fill="#10c020" stroke="#063" /></svg>
          <span className="ml-[6px] w-[22px] h-[31px] border border-[#d8d8d8] bg-[#f6f6f6] flex items-center justify-center gap-[2px] shrink-0"><span className="w-[2px] h-[11px] bg-[#888]" /><span className="w-[2px] h-[11px] bg-[#888]" /></span>
          <span className="ml-[5px] w-[10px] h-[11px] bg-[#e80000] border border-[#333] shrink-0" />
          <Ic n="wrench" cls="w-[20px] ml-[2px]" />
          <span className="ml-[2px] text-[16.700px] text-[#8a8a8a] whitespace-nowrap">Interactive</span>
        </div>
        <div className="w-[100px] shrink-0 flex items-center pl-[15px] gap-[5px]">
          {["V", "A", "W"].map((l) => (
            <span key={l} className="w-[17px] h-[17px] rounded-full border-2 border-[#7ea27e] text-[9px] font-bold text-[#5a845a] flex items-center justify-center bg-white shrink-0">{l}</span>
          ))}
          <span className="w-[12px] h-[17px] border-2 border-[#7ea27e] shrink-0" />
        </div>
      </div>

      {/* middle */}
      <div className="h-[665px] shrink-0 flex">
        {/* design toolbox */}
        <div className="w-[200px] shrink-0 border-r-2 border-[#a0a0a0] pl-[3px] pt-[2px] flex flex-col">
          <div className="flex items-center">
            <div className="w-[151px] h-[32px] bg-gradient-to-r from-[#b9cde3] to-[#d4e2f0] pl-[4px] text-[17.400px] leading-[30px] text-[#111] whitespace-nowrap">Design Toolbox</div>
            <span className="ml-[4px] w-[13px] h-[14px] bg-[#e4e4e4] border border-[#999] text-[8px] leading-[12px] text-center text-[#aaa]">▲</span>
            <span className="ml-[3px] w-[13px] h-[14px] bg-[#e4e4e4] border border-[#666] text-[11px] font-bold leading-[11px] text-center">x</span>
          </div>
          <div className="mt-[3px] w-[183px] h-[591px] border border-white border-r-[#888] border-b-[#888] flex flex-col">
            <div className="h-[26px] shrink-0 flex items-center pl-[6px] gap-[8px]">
              <Ic n="new" cls="w-[18px]" /><Ic n="open" cls="w-[18px]" /><Ic n="save" cls="w-[18px]" /><Ic n="tb4" cls="w-[18px]" />
              <span className="w-[14px] h-[14px] bg-[#ddd] text-[9px] text-white text-center shrink-0">Te</span>
              <span className="ml-[26px]"><Ic n="tb6" cls="w-[18px]" /></span>
            </div>
            <div className="mx-[1px] w-[179px] h-[535px] shrink-0 bg-white border border-[#888] border-r-[#ddd] overflow-hidden text-[16.500px] leading-[18px] pt-[3px] text-[#111]">
              <div className="whitespace-nowrap -ml-[18px]">constant current led drive</div>
              <div className="whitespace-nowrap pl-[4px] bg-[#f4f4f4]">constant current led d</div>
              <div className="whitespace-nowrap pl-[4px]">constant current led d</div>
            </div>
            <div className="h-[25px] shrink-0 flex items-center bg-[#f0f0f0] mx-[1px]">
              <span className="w-[30px] flex justify-center shrink-0"><svg width="9" height="12" viewBox="0 0 9 12"><path d="M7 1L2 6l5 5" fill="none" stroke="#555" strokeWidth="2" /></svg></span>
              <span className="ml-[29px] w-[71px] h-[23px] bg-[#cdcdcd] shrink-0" />
              <span className="ml-[28px]"><svg width="9" height="12" viewBox="0 0 9 12"><path d="M2 1l5 5-5 5" fill="none" stroke="#555" strokeWidth="2" /></svg></span>
            </div>
          </div>
          <div className="flex mt-[3px] text-[15.500px]">
            <span className="ml-[1px] w-[80px] h-[25px] text-center leading-[24px] bg-[#f0f0f0] border-b-2 border-r border-[#888] shrink-0">Hierarchy</span>
            <span className="w-[56px] h-[24px] -mt-[1px] border-t border-x border-[#888] pl-[4px] leading-[22px] overflow-hidden whitespace-nowrap shrink-0">Visibility</span>
            <span className="ml-[2px] w-[21px] h-[24px] -mt-[1px] bg-[#e8e8e8] border border-[#bbb] flex items-center justify-center shrink-0"><span className="border-y-[5px] border-y-transparent border-r-[6px] border-r-black" /></span>
            <span className="w-[21px] h-[24px] -mt-[1px] bg-[#e8e8e8] border border-[#bbb] flex items-center justify-center shrink-0"><span className="border-y-[5px] border-y-transparent border-l-[6px] border-l-black" /></span>
          </div>
        </div>

        {/* canvas column */}
        <div className="flex-1 min-w-0 flex flex-col pl-[3px] pt-[3px]">
          <Schematic />
          <div className="w-[987px] h-[24px] flex bg-[#f0f0f0] shrink-0">
            <span className="w-[27px] flex items-center justify-center"><svg width="10" height="14" viewBox="0 0 10 14"><path d="M8 1L2 7l6 6" fill="none" stroke="#555" strokeWidth="2.400" /></svg></span>
            <span className="flex-1 bg-[#cdcdcd]" />
          </div>
          <div className="flex h-[47px] items-start shrink-0 -ml-[1px] text-[16.600px] whitespace-nowrap">
            <div className="mt-[7px] w-[270px] h-[34px] shrink-0 border-b-2 border-r-2 border-l border-[#777] flex items-center pl-[3px] gap-[8px] pt-[3px]"><DocIcon s={24} /><span>constant current led drive#1 *</span></div>
            <div className="mt-[9px] w-[273px] h-[30px] shrink-0 border-t-2 border-b-2 border-r-2 border-l border-[#777] flex items-center pl-[3px] gap-[8px] pt-[1px]"><DocIcon s={24} /><span>constant current led drive#2 *</span></div>
            <div className="mt-[9px] w-[1148px] h-[1px] bg-[#888] shrink-0" />
            <svg width="14" height="14" viewBox="0 0 14 14" className="-ml-[14px] mt-[18px] shrink-0"><rect x="2" y="2" width="9" height="9" fill="#fff" stroke="#003090" /><path d="M1 8l4-5M4 11l7-7" stroke="#c00" /></svg>
          </div>
        </div>
      </div>

      {/* output */}
      <div className="h-[178px] shrink-0 border-t-2 border-[#b0b0b0] flex">
        <div className="w-[37px] shrink-0 flex flex-col items-center pl-[1px]">
          <span className="mt-[3px] w-[13px] h-[13px] border border-[#666] bg-[#e4e4e4] text-[11px] font-bold leading-[11px] text-center">x</span>
          <span className="mt-[4px] w-[13px] h-[13px] border border-[#aaa] bg-[#e4e4e4] text-[8px] leading-[11px] text-center text-[#999]">▶</span>
          <div className="mt-[2px] -ml-[2px] w-[32px] h-[138px] bg-gradient-to-b from-[#d4e2f0] to-[#b9cde3] overflow-hidden flex items-center justify-center">
            <span className="[writing-mode:vertical-rl] rotate-180 whitespace-nowrap text-[17px] font-bold text-[#111] font-['Liberation_Sans'] h-[134px] overflow-hidden">Spreadsheet View</span>
          </div>
        </div>
        <div className="flex-1 min-w-0 flex flex-col pl-[2px] pr-[8px]">
          <div className="mt-[5px] h-[136px] shrink-0 bg-white border border-[#888] pl-[7px] pt-[2px] text-[17.450px] leading-[29px] text-[#111]">
            <div>------ Checking SPICE netlist for constant current led drive - 27 April 2016, 11:43:32 ------</div>
            <div>======= SPICE Netlist check completed, 0 error(s), 0 warning(s) =======</div>
          </div>
          <div className="flex text-[15.500px] h-[30px] items-start -mr-[8px]">
            <span className="ml-[2px] mt-[2px] w-[59px] h-[25px] shrink-0 border-r border-b-2 border-[#999] text-center leading-[26px]">Results</span>
            <span className="ml-[1px] mt-[2px] w-[53px] h-[25px] shrink-0 border-r border-b-2 border-[#999] pl-[5px] leading-[26px]">Nets</span>
            <span className="ml-[2px] mt-[2px] w-[99px] h-[25px] shrink-0 border-r border-b-2 border-[#999] text-center leading-[26px]">Components</span>
            <span className="ml-[2px] mt-[2px] w-[106px] h-[25px] shrink-0 border-r border-b-2 border-[#999] text-center leading-[26px]">Copper layers</span>
            <span className="ml-[2px] w-[88px] h-[27px] shrink-0 border-r border-b-2 border-[#999] text-center leading-[32px]">Simulation</span>
            <span className="flex-1 h-[1px] bg-[#999]" />
          </div>
        </div>
      </div>

      {/* status bar */}
      <div className="h-[27px] shrink-0 border-t-2 border-[#c4c4c4] flex items-center text-[16px] text-[#111] relative">
        <span className="ml-[1343px] text-[#555] pt-[4px]">-</span>
        <div className="ml-[138px] w-[183px] h-full border-l border-[#c8c8c8] pl-[5px] pt-[3px] overflow-hidden whitespace-nowrap shrink-0">constant current led dr</div>
        <div className="w-[183px] h-full border-l border-[#c8c8c8] pl-[4px] pt-[3px] whitespace-nowrap shrink-0">Tran: 0.072 s</div>
        <div className="w-[65px] h-full border-l border-[#c8c8c8] pl-[4px] flex items-center gap-[1px] shrink-0">
          {[0, 1, 2, 3, 4, 5, 6, 7].map((i) => <span key={i} className="w-[6px] h-[12px] border border-[#c0c0c0] bg-[#e8e8e8]" />)}
        </div>
      </div>

      {/* taskbar */}
      <div className="h-[60px] shrink-0 bg-black flex items-center text-white">
        <span className="w-[72px] flex justify-center shrink-0"><WinLogo /></span>
        <span className="w-[72px] flex justify-center shrink-0">
          <svg width="26" height="28" viewBox="0 0 26 28"><circle cx="16" cy="10" r="8.500" fill="none" stroke="#fff" strokeWidth="1.500" /><path d="M10 16L1 27" stroke="#fff" strokeWidth="1.500" /></svg>
        </span>
        <span className="w-[72px] flex justify-center shrink-0">
          <svg width="30" height="22" viewBox="0 0 30 22"><rect x="7" y="1" width="16" height="20" fill="none" stroke="#fff" strokeWidth="1.400" /><path d="M4 5H1v12h3M26 5h3v12h-3" fill="none" stroke="#fff" /></svg>
        </span>
        <span className="ml-[10px] w-[61px] h-full flex items-center justify-center border-b-[3px] border-[#cfe8b8] shrink-0"><Chrome /></span>
        <span className="ml-[14px] w-[60px] flex justify-center shrink-0"><Folder /></span>
        <span className="ml-[15px] w-[60px] flex justify-center shrink-0"><Store /></span>
        <span className="ml-[9px] w-[73px] h-full bg-[#333] flex items-center justify-center border-b-[3px] border-[#cfe8b8] shrink-0"><MsIcon s={34} /></span>

        <div className="ml-auto flex items-center h-full">
          <span className="w-[48px] flex justify-center"><svg width="20" height="12" viewBox="0 0 20 12"><path d="M1 11l9-9 9 9" fill="none" stroke="#fff" strokeWidth="1.200" /></svg></span>
          <span className="w-[48px] flex justify-center"><svg width="26" height="18" viewBox="0 0 26 18"><path d="M1 2v5c0 2 2 3 4 3M3 2v3" stroke="#fff" fill="none" /><rect x="7" y="5" width="17" height="11" fill="none" stroke="#fff" /><rect x="9" y="7" width="11" height="7" fill="#fff" /></svg></span>
          <span className="w-[50px] flex justify-center"><svg width="20" height="20" viewBox="0 0 20 20"><path d="M1 19C2 10 9 3 18 2M5 19c1-6 6-11 12-12M9 19c1-3 3-6 7-7" fill="none" stroke="#fff" /><rect x="15" y="16" width="3" height="3" fill="#fff" /></svg></span>
          <span className="w-[42px] flex justify-center"><svg width="24" height="24" viewBox="0 0 24 24"><path d="M0 1h24v19h-8l-4 4-4-4H0z" fill="#fff" /><path d="M5 7h14M5 11h14M5 15h10" stroke="#000" /></svg></span>
          <span className="w-[66px] flex justify-center"><svg width="34" height="20" viewBox="0 0 34 20"><rect x=".5" y=".5" width="33" height="19" fill="none" stroke="#fff" /><path d="M3 5h28M3 9h28M9 14h16" stroke="#fff" strokeDasharray="2 1.500" /></svg></span>
          <span className="w-[50px] text-center text-[16px] leading-[27px] pt-[1px]"><div>ENG</div><div>ET</div></span>
          <span className="w-[126px] text-center text-[16px] leading-[26px] pt-[1px]"><div>11:46</div><div>27/04/2016</div></span>
          <span className="w-[7px] h-full border-l-2 border-[#555]" />
        </div>
      </div>

      {/* overlays */}
      <Multimeter />
      <Scope />
      <div className="absolute left-[1871px] top-[26px] w-[49px] h-[29px] bg-[#ffffe1] border border-[#777] text-[16.500px] leading-[26px] pl-[2px] text-[#111]">Close</div>
    </div>
  );
}
